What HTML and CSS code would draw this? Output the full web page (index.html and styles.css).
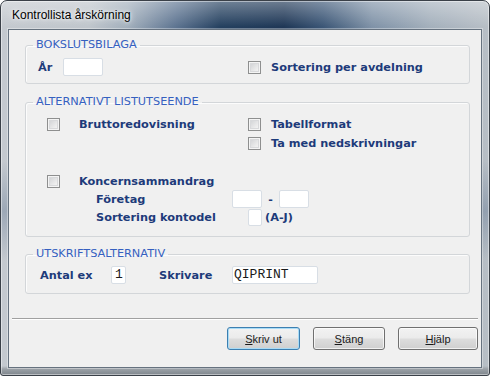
FILE: index.html
```html
<!DOCTYPE html>
<html lang="sv">
<head>
  <meta charset="UTF-8">
  <title>Kontrollista årskörning</title>
  <link rel="stylesheet" href="styles.css">
</head>
<body>
  <div class="window">
    <div class="titlebar">
      <span class="title">Kontrollista årskörning</span>
    </div>

    <div class="client">
      <fieldset class="group group-bokslut">
        <legend>BOKSLUTSBILAGA</legend>
        <div class="row-two">
          <div class="cell">
            <span class="label label-year">År</span>
            <span class="field field-year"></span>
          </div>
          <div class="cell">
            <span class="check"></span>
            <span class="label">Sortering per avdelning</span>
          </div>
        </div>
      </fieldset>

      <fieldset class="group group-lista">
        <legend>ALTERNATIVT LISTUTSEENDE</legend>
        <div class="opts">
          <span class="check"></span>
          <span class="label">Bruttoredovisning</span>
          <span class="check"></span>
          <span class="label">Tabellformat</span>

          <span></span>
          <span></span>
          <span class="check"></span>
          <span class="label">Ta med nedskrivningar</span>
        </div>

        <div class="koncern">
          <div class="line line-main">
            <span class="check"></span>
            <span class="label label-koncern">Koncernsammandrag</span>
          </div>
          <div class="line line-sub">
            <span class="label label-foretag">Företag</span>
            <span class="field field-small"></span>
            <span class="dash">-</span>
            <span class="field field-small"></span>
          </div>
          <div class="line line-sub line-last">
            <span class="label label-kontodel">Sortering kontodel</span>
            <span class="field field-tiny"></span>
            <span class="label label-range">(A-J)</span>
          </div>
        </div>
      </fieldset>

      <fieldset class="group group-utskrift">
        <legend>UTSKRIFTSALTERNATIV</legend>
        <div class="line">
          <span class="label label-antal">Antal ex</span>
          <span class="field field-antal">1</span>
          <span class="label label-skrivare">Skrivare</span>
          <span class="field field-printer">QIPRINT</span>
        </div>
      </fieldset>

      <div class="separator"></div>

      <div class="buttons">
        <button class="btn btn-default"><u>S</u>kriv ut</button>
        <button class="btn"><u>S</u>täng</button>
        <button class="btn btn-help"><u>H</u>jälp</button>
      </div>
    </div>
  </div>
</body>
</html>
```

FILE: styles.css
```css
:root {
  --client-bg: #f0f0f0;
  --label: #1d3b7a;
  --legend: #3560c0;
  --group-border: #d3d6d9;
  --field-border: #d8dee5;
}

html, body {
  margin: 0;
  background: #ffffff;
}

body {
  width: 490px;
  height: 376px;
  overflow: hidden;
}

/* Window frame (Aero glass look) */
.window {
  box-sizing: border-box;
  width: 490px;
  height: 376px;
  display: flex;
  flex-direction: column;
  border: 1px solid #3a4048;
  border-radius: 7px 7px 3px 3px;
  box-shadow: inset 0 0 0 1px rgba(255, 255, 255, 0.45);
  background:
    linear-gradient(to top, #7f868d 0, #9ba1a7 6px, rgba(155, 161, 167, 0) 9px),
    linear-gradient(to bottom, rgba(255, 255, 255, 0.35), rgba(255, 255, 255, 0) 26px),
    linear-gradient(to bottom, rgba(0, 0, 0, 0) 160px, rgba(40, 70, 110, 0.25) 210px, rgba(0, 0, 0, 0) 260px),
    linear-gradient(to right, #c4c9cf 0%, #c0c6cc 18%, #a2afbc 26%, #5c7390 36%, #24405f 45%, #1f3756 58%, #3b5676 66%, #7f92a7 76%, #a4b0bc 88%, #b8bfc6 100%);
}

.titlebar {
  height: 28px;
  display: flex;
  align-items: center;
  padding-left: 11px;
  padding-bottom: 1px;
  box-sizing: border-box;
}

.title {
  font-family: "Liberation Sans", Arial, sans-serif;
  font-size: 12px;
  color: #000000;
  text-shadow: 0 0 6px rgba(255, 255, 255, 0.9), 0 0 3px rgba(255, 255, 255, 0.9);
}

.client {
  flex: 1;
  margin: 0 7px 7px 7px;
  background: var(--client-bg);
  border: 1px solid #66727f;
  box-shadow: 0 0 0 1px rgba(255, 255, 255, 0.35);
  display: flex;
  flex-direction: column;
}

/* Group boxes */
.group {
  margin: 0 11px 0 16px;
  padding: 0 7px;
  border: 1px solid var(--group-border);
  border-radius: 3px;
  box-shadow: inset 1px 1px 0 rgba(255, 255, 255, 0.8);
  min-width: 0;
}

.group legend {
  padding: 0 3px;
  font-family: "DejaVu Sans", Verdana, sans-serif;
  font-size: 11.3px;
  line-height: 14px;
  color: var(--legend);
}

.group-bokslut {
  margin-top: 8px;
  padding-top: 6px;
  padding-bottom: 7px;
}

.group-lista {
  margin-top: 11px;
  padding-top: 6px;
  padding-bottom: 9px;
}

.group-utskrift {
  margin-top: 10px;
  padding-top: 5px;
  padding-bottom: 9px;
}

.label {
  font-family: "DejaVu Sans", Verdana, sans-serif;
  font-size: 11.3px;
  font-weight: bold;
  color: var(--label);
  white-space: nowrap;
}

.check {
  box-sizing: border-box;
  width: 13px;
  height: 13px;
  border: 1px solid #8e8f8f;
  background: linear-gradient(135deg, #cbcdd0, #eeeeee 70%, #f6f6f6);
  box-shadow: inset 0 0 0 1px #f4f4f4, inset 0 0 0 2px #d8d9db;
}

.field {
  box-sizing: border-box;
  height: 18px;
  background: #ffffff;
  border: 1px solid var(--field-border);
  border-radius: 2px;
  font-family: "Liberation Mono", "Courier New", monospace;
  font-size: 13px;
  line-height: 16px;
  color: #1a1a1a;
}

/* Bokslut row */
.row-two {
  display: grid;
  grid-template-columns: 215px 1fr;
  height: 18px;
  align-items: center;
}

.cell {
  display: flex;
  align-items: center;
}

.label-year {
  width: 25px;
  padding-left: 5px;
}

.field-year {
  width: 40px;
}

.cell .check {
  margin-right: 10px;
}

/* Alternativt listutseende */
.opts {
  display: grid;
  grid-template-columns: 32px 169px 23px 1fr;
  grid-auto-rows: 19px;
  align-items: center;
  padding-left: 14px;
}

.koncern {
  padding-top: 19px;
}

.line {
  display: flex;
  align-items: center;
  height: 18px;
}

.line-main {
  padding-left: 14px;
}

.line-main .check {
  margin-right: 19px;
}

.line-sub {
  padding-left: 63px;
}

.line-last {
  height: 19px;
}

.label-foretag {
  width: 136px;
}

.label-kontodel {
  width: 152px;
}

.field-small {
  width: 30px;
}

.field-tiny {
  width: 14px;
  height: 17px;
}

.dash {
  width: 17px;
  text-align: center;
  font-family: "DejaVu Sans", Verdana, sans-serif;
  font-size: 11px;
  font-weight: bold;
  color: var(--label);
}

.label-range {
  margin-left: 3px;
}

/* Utskriftsalternativ */
.group-utskrift .line {
  padding-left: 7px;
}

.label-antal {
  width: 71px;
}

.field-antal {
  width: 15px;
  padding-left: 3px;
}

.label-skrivare {
  margin-left: 33px;
  width: 73px;
}

.field-printer {
  width: 86px;
  padding-left: 1px;
}

/* Bottom */
.separator {
  margin: 24px 3px 0 3px;
  border-top: 1px solid #a0a0a0;
  border-bottom: 1px solid #ffffff;
}

.buttons {
  display: flex;
  justify-content: flex-end;
  gap: 13px;
  margin: 7px 3px 0 0;
}

.btn {
  box-sizing: border-box;
  width: 72px;
  height: 23px;
  padding: 0;
  border: 1px solid #707070;
  border-radius: 3px;
  background: linear-gradient(to bottom, #f2f2f2 0%, #ebebeb 48%, #dddddd 52%, #cfcfcf 100%);
  box-shadow: inset 0 0 0 1px rgba(255, 255, 255, 0.7);
  font-family: "Liberation Sans", Arial, sans-serif;
  font-size: 11px;
  color: #1a1a1a;
}

.btn-default {
  width: 73px;
  border-color: #3c7fb1;
  box-shadow: inset 0 0 0 1px #a8dbf6;
}

.btn-help {
  width: 80px;
}
```
